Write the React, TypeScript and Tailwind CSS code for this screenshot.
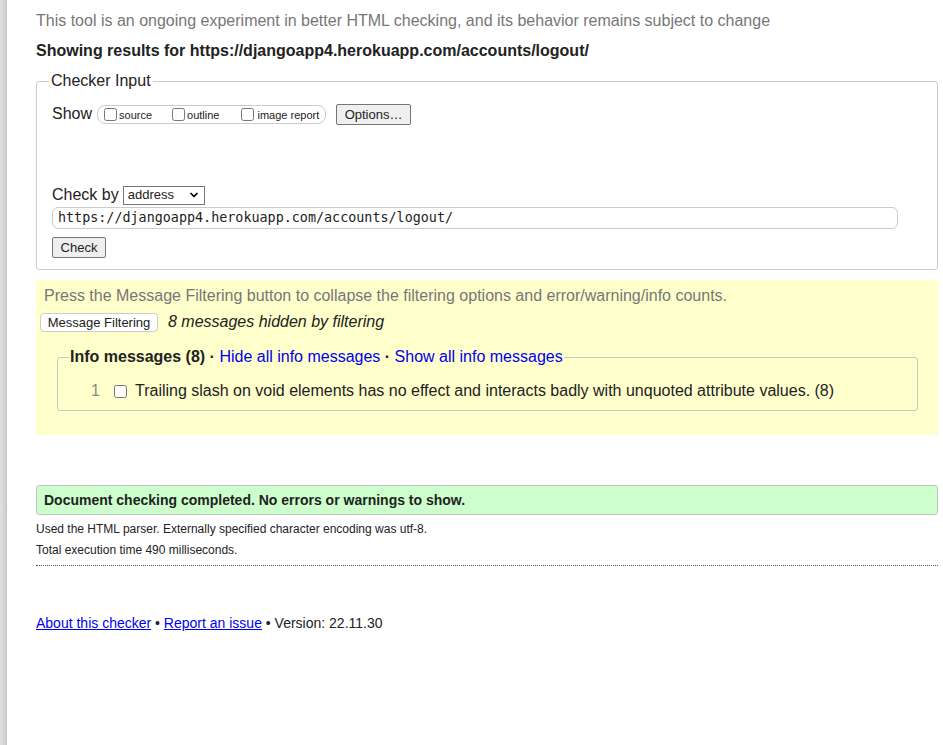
import { ChevronDown } from "lucide-react"

const sans = "font-['Liberation_Sans',Arial,sans-serif]"

function Checkbox({ className = "" }: { className?: string }) {
  return <input type="checkbox" className={"m-0 h-[13px] w-[13px] " + className} />
}

export default function App() {
  return (
    <div className={`flex min-h-[745px] bg-white text-[#222] ${sans}`}>
      {/* window edge */}
      <div className="w-[7px] shrink-0 bg-gradient-to-r from-[#e2e2e2] to-[#cfcfcf] border-r border-[#c4c4c4]" />

      <div className="flex-1 pl-[29px] pr-[5px] pt-[11px]">
        <p className="h-[20px] text-[16px] leading-[20px] text-[#777] whitespace-nowrap">
          This tool is an ongoing experiment in better HTML checking, and its behavior remains subject to change
        </p>
        <p className="mt-[10px] h-[20px] text-[16px] leading-[20px] font-bold whitespace-nowrap">
          Showing results for https://djangoapp4.herokuapp.com/accounts/logout/
        </p>

        {/* Checker input */}
        <fieldset className="mt-[10px] border border-[#ccc] rounded-[3px] px-[15px] pb-[11px]">
          <legend className="ml-[-3px] px-[2px] text-[16px] leading-[20px]">Checker Input</legend>

          <div className="mt-[11px] flex h-[24px] items-center">
            <span className="text-[16px]">Show</span>
            <div className="ml-[5px] flex h-[19px] w-[229px] items-center rounded-[8px] border border-[#ccc] pl-[6px] text-[11px]">
              <Checkbox />
              <span className="ml-[2px] mt-[2px]">source</span>
              <Checkbox className="ml-[20px]" />
              <span className="ml-[2px] mt-[2px]">outline</span>
              <Checkbox className="ml-[22px]" />
              <span className="ml-[3px] mt-[2px]">image report</span>
            </div>
            <button className="ml-[10px] h-[21px] w-[75px] rounded-[2px] border border-[#767676] bg-[#efefef] text-[13px] leading-[19px]">
              Options…
            </button>
          </div>

          <div className="mt-[59px] flex h-[20px] items-center">
            <span className="text-[16px]">Check by</span>
            <div className="ml-[4px] flex h-[19px] w-[82px] items-center justify-between border border-[#767676] bg-white pl-[4px] pr-[4px] text-[13px]">
              <span>address</span>
              <ChevronDown size={12} strokeWidth={3.5} className="text-black" />
            </div>
          </div>

          <div className="mt-[2px] flex h-[22px] w-[846px] items-center rounded-[6px] border border-[#ccc] pl-[5px] font-['DejaVu_Sans_Mono',monospace] text-[13.4px]">
            https://djangoapp4.herokuapp.com/accounts/logout/
          </div>

          <button className="mt-[8px] block h-[21px] w-[54px] rounded-[2px] border border-[#767676] bg-[#efefef] text-[13px] leading-[19px]">
            Check
          </button>
        </fieldset>

        {/* Message filtering */}
        <div className="mt-[10px] bg-[#ffffcc] pl-[8px] pr-[8px] pt-[6px] pb-[24px]">
          <p className="h-[20px] text-[16px] leading-[20px] text-[#777] whitespace-nowrap">
            Press the Message Filtering button to collapse the filtering options and error/warning/info counts.
          </p>
          <div className="mt-[6px] flex h-[20px] items-center">
            <button className="ml-[-4px] h-[19px] w-[118px] rounded-[4px] border border-[#ccc] bg-white text-[13px] leading-[17px]">
              Message Filtering
            </button>
            <span className="ml-[10px] text-[16px] italic">8 messages hidden by filtering</span>
          </div>

          <fieldset className="mt-[15px] ml-[13px] mr-[12px] rounded-[3px] border border-[#c8c8c8] pl-[11px] pb-[9px]">
            <legend className="px-[1px] text-[16px] leading-[20px] whitespace-nowrap">
              <b>Info messages (8) ·</b> <span className="text-[#0000ee]">Hide all info messages</span>{" "}
              <b>·</b> <span className="text-[#0000ee]">Show all info messages</span>
            </legend>
            <div className="mt-[14px] flex h-[20px] items-center text-[16px]">
              <span className="w-[31px] text-right text-[#888]">1</span>
              <Checkbox className="ml-[14px]" />
              <span className="ml-[8px]">Trailing slash on void elements has no effect and interacts badly with unquoted attribute values. (8)</span>
            </div>
          </fieldset>
        </div>

        {/* Result */}
        <div className="mt-[50px] flex h-[30px] items-center rounded-[3px] border border-[#c4c4c4] bg-[#ccffcc] px-[7px] text-[14px] font-bold">
          Document checking completed. No errors or warnings to show.
        </div>
        <p className="mt-[6px] h-[16px] text-[12px] leading-[16px]">
          Used the HTML parser. Externally specified character encoding was utf-8.
        </p>
        <p className="mt-[5px] h-[16px] text-[12px] leading-[16px]">Total execution time 490 milliseconds.</p>
        <div className="mt-[7px] border-t border-dotted border-[#555]" />

        <p className="mt-[48px] h-[18px] text-[14px] leading-[18px]">
          <a className="text-[#0000ee] underline">About this checker</a> •{" "}
          <a className="text-[#0000ee] underline">Report an issue</a> • Version: 22.11.30
        </p>
      </div>
    </div>
  )
}
